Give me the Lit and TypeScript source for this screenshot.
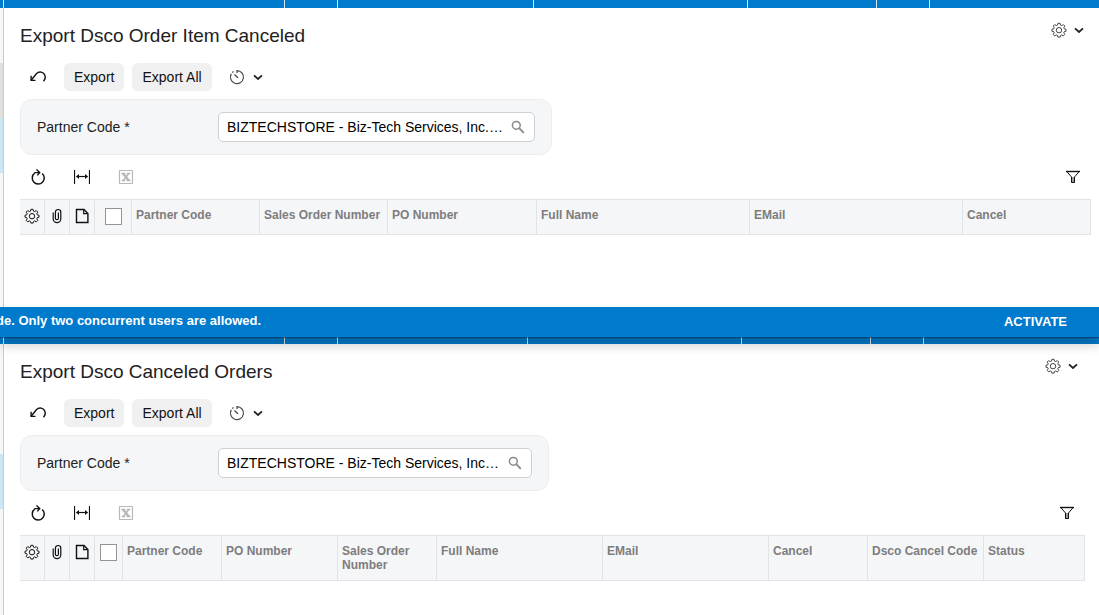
import { LitElement, html, css, svg } from "lit";
import { customElement, property } from "lit/decorators.js";

const gearPath =
  "M6.9 1.3h2.200l.4 1.800 1.200.5 1.600-1 1.500 1.500-1 1.600.5 1.200 1.700.3v2.100l-1.700.3-.5 1.200 1 1.600-1.500 1.500-1.600-1-1.200.5-.4 1.700H6.9l-.4-1.700-1.200-.5-1.600 1-1.500-1.500 1-1.600-.5-1.200L1 9.300V7.200l1.700-.3.5-1.200-1-1.600 1.500-1.500 1.600 1 1.200-.5z";

const shapes = {
  gear: svg`<path d=${gearPath} /><circle cx="8" cy="8.200" r="2.700" />`,
  chevron: svg`<path stroke-width="1.800" d="M4 6.300 8 10l4-3.700" />`,
  undo: svg`<path stroke-width="1.400" d="M1.200 11.200 6.300 4.700C9.300 1.900 13.300 2.900 14.700 5.900c.9 2.200.5 4.600-1.200 6.300" /><path stroke-width="1.400" d="M1.100 6.700v4.700h4.400" />`,
  clock: svg`<path stroke-width="1.200" d="M8 4V1.600a6.500 6.500 0 1 1-5.700 3.300M5.500 5.500 9 8.700M3.300 3.500l1.200-1" />`,
  refresh: svg`<path stroke-width="1.500" d="M4.700 4.200a6 6 0 1 0 7.500.3" /><path stroke-width="1.400" d="M4.400 3.600h5.200M6.500.6l3.200 3-2.400 2.800" />`,
  fit: svg`<path stroke-width="1.200" d="M.5 1v14M15.500 1v14" /><path stroke-width="1.200" d="M2.500 7.500h11" /><path fill="currentColor" stroke="none" d="M2 7.500 5 5v5zM14 7.500 11 5v5z" />`,
  excel: svg`<rect x="1.500" y="1.500" width="13" height="13" rx=".5" stroke-width="1.200" /><path stroke-width="2.800" d="m5.200 4.500 5.400 7" /><path stroke-width="1.400" d="m10.800 4.500-5.600 7M3.400 4.500h4M9 4.500h3.400M3.600 11.500H7M8.800 11.500h3.800" />`,
  filter: svg`<path fill="#999" stroke="none" d="M6.200 8h3.600v5.500H6.200z" /><path d="M14.200 2.500 9.500 8v5.500h-3V8L1.800 2.500" /><path stroke-width="1.400" d="M1 2.500h14" />`,
  clip: svg`<path stroke-width="1.200" d="M4.200 4.500v6.300a3.800 3.800 0 0 0 7.600 0V4.200a2.700 2.700 0 0 0-5.400 0v6a1.500 1.500 0 0 0 3 0V4.500" />`,
  page: svg`<path stroke-width="1.400" d="M2.500 1.500h7.500l3.900 4v9H2.500z" /><path stroke-width="1.200" d="M9.700 1.700v4h4" />`,
  search: svg`<circle cx="6.300" cy="6.300" r="3.900" stroke-width="1.500" /><path stroke-width="1.800" d="m9.200 9.200 4.600 4.600" />`,
};

const icon = (name: keyof typeof shapes) =>
  html`<svg class="icon ${name}" viewBox="0 0 16 16" aria-hidden="true">${shapes[name]}</svg>`;

interface Column {
  title: string;
  width: number;
}

@customElement("tab-strip")
class TabStrip extends LitElement {
  static styles = css`
    :host {
      display: flex;
      height: 8px;
      background: #007acc;
    }
    .segment {
      box-sizing: border-box;
      border-right: 1px solid #d5e6f3;
    }
    .edge { width: 4px; }
    .menu { width: 281px; }
    .narrow { width: 53px; }
    .search { flex: 1; }
    .company { width: 214px; }
    .date { width: 129px; }
    .tail { width: calc(161px + var(--gutter)); }
  `;

  render() {
    return html`
      ${["edge", "menu", "narrow", "search", "company", "date", "narrow"].map(
        (kind) => html`<span class="segment ${kind}"></span>`
      )}<span class="tail"></span>`;
  }
}

@customElement("export-screen")
class ExportScreen extends LitElement {
  @property() heading = "";
  @property() partner = "";
  @property({ type: Number }) checkWidth = 37;
  @property({ attribute: false }) columns: Column[] = [];

  static styles = css`
    :host {
      display: grid;
      grid-template-columns: 3px minmax(0, 1fr);
    }
    .rail {
      padding-top: var(--rail-top);
      background: #f5f6f8;
    }
    .hovered {
      height: var(--rail-hovered);
      background: #e1e0df;
    }
    .current {
      height: 55px;
      background: #cde6f5;
    }
    .panel {
      display: flex;
      flex-direction: column;
      gap: 8px;
      padding: 12px var(--gutter) var(--space-below) 16px;
      border-left: 1px solid #c9cbce;
      background: #fff;
    }
    .head {
      display: flex;
      justify-content: space-between;
      align-items: flex-start;
      padding-bottom: 3px;
    }
    h1 {
      margin: 0;
      font-size: 19px;
      font-weight: 400;
      line-height: 32px;
      color: #212121;
    }
    button {
      display: inline-flex;
      align-items: center;
      justify-content: center;
      height: 28px;
      padding: 0;
      border: 0;
      border-radius: 6px;
      background: none;
      color: #111;
      font: inherit;
      font-size: 14px;
      cursor: pointer;
    }
    .text {
      padding: 0 10px;
      background: #f0f0f0;
    }
    .tool { width: 36px; }
    .split {
      gap: 5px;
      padding: 0 9px;
      color: #444;
    }
    .settings {
      height: 20px;
      gap: 4px;
      padding: 0 4px;
      color: #444;
    }
    .bar {
      display: flex;
      gap: 8px;
    }
    .push { margin-left: auto; }
    .icon {
      display: block;
      width: 16px;
      height: 16px;
      flex: none;
      fill: none;
      stroke: currentColor;
    }
    .chevron { color: #222; }
    button:disabled { color: #b8b8b8; }
    .form {
      display: grid;
      grid-template-columns: 1fr 1fr;
      column-gap: 8px;
    }
    .card {
      display: flex;
      align-items: center;
      padding: 12px 16px;
      border: 1px solid #ebedef;
      border-radius: 12px;
      background: #f5f6f8;
      font-size: 14px;
    }
    .label {
      width: 181px;
      flex: none;
      color: #212121;
    }
    .lookup {
      display: flex;
      align-items: center;
      flex: 1;
      min-width: 0;
      height: 28px;
      padding: 0 8px;
      border: 1px solid #ced0d3;
      border-radius: 5px;
      background: #fff;
    }
    .value {
      flex: 1;
      min-width: 0;
      padding: 0;
      border: 0;
      outline: 0;
      background: none;
      color: #000;
      font: inherit;
      text-overflow: ellipsis;
    }
    .find {
      height: 16px;
      color: #888;
    }
    table {
      width: 100%;
      table-layout: fixed;
      border-collapse: separate;
      border-spacing: 0;
      background: #f5f6f8;
    }
    th {
      box-sizing: border-box;
      height: 36px;
      padding: 8px 4px;
      border: solid #e1e3e6;
      border-width: 1px 1px 1px 0;
      vertical-align: top;
      text-align: left;
      font-size: 12px;
      font-weight: 700;
      line-height: 14px;
      color: #7d7d7d;
    }
    .mark {
      color: #111;
    }
    .mark .icon { margin: 0 auto; }
    .tick {
      padding: 8px 0;
      text-align: center;
    }
    .all {
      appearance: none;
      display: block;
      box-sizing: border-box;
      width: 17px;
      height: 17px;
      margin: 0 auto;
      border: 1px solid #949494;
      background: #fff;
    }
  `;

  render() {
    return html`
      <div class="rail">
        <div class="hovered"></div>
        <div class="current"></div>
      </div>
      <main class="panel">
        <header class="head">
          <h1>${this.heading}</h1>
          <button class="settings" aria-label="Settings">${icon("gear")}${icon("chevron")}</button>
        </header>
        <div class="bar">
          <button class="tool" aria-label="Undo">${icon("undo")}</button>
          <button class="text">Export</button>
          <button class="text">Export All</button>
          <button class="split" aria-label="Schedule">${icon("clock")}${icon("chevron")}</button>
        </div>
        <div class="form">
          <div class="card">
            <label class="label" for="partner">Partner Code *</label>
            <div class="lookup">
              <input class="value" id="partner" .value=${this.partner} />
              <button class="find" aria-label="Search">${icon("search")}</button>
            </div>
          </div>
        </div>
        <div class="bar">
          <button class="tool" aria-label="Refresh">${icon("refresh")}</button>
          <button class="tool" aria-label="Fit to screen">${icon("fit")}</button>
          <button class="tool" aria-label="Export to Excel" disabled>${icon("excel")}</button>
          <button class="tool push" aria-label="Filter">${icon("filter")}</button>
        </div>
        <table>
          <colgroup>
            ${[25, 25, 25, this.checkWidth, ...this.columns.map((c) => c.width)].map(
              (width) => html`<col style="width:${width}px" />`
            )}
          </colgroup>
          <thead>
            <tr>
              <th class="mark" aria-label="Settings">${icon("gear")}</th>
              <th class="mark" aria-label="Files">${icon("clip")}</th>
              <th class="mark" aria-label="Notes">${icon("page")}</th>
              <th class="tick"><input class="all" type="checkbox" aria-label="Select all" /></th>
              ${this.columns.map((c) => html`<th scope="col">${c.title}</th>`)}
            </tr>
          </thead>
        </table>
      </main>
    `;
  }
}

@customElement("app-root")
class AppRoot extends LitElement {
  static styles = css`
    :host {
      display: flex;
      flex-direction: column;
      min-height: 100vh;
      background: #fff;
      font-family: "Liberation Sans", Arial, sans-serif;
    }
    .items {
      --gutter: 8px;
      --rail-top: 55px;
      --rail-hovered: 55px;
      --space-below: 72px;
    }
    .orders {
      --gutter: 14px;
      --rail-top: 110px;
      --rail-hovered: 0px;
      --space-below: 24px;
    }
    .grow { flex: 1; }
    .under { height: 7px; }
    .banner {
      position: relative;
      z-index: 1;
      box-sizing: border-box;
      display: flex;
      align-items: center;
      justify-content: space-between;
      height: 30px;
      padding-right: 32px;
      background: #007acc;
      color: #fff;
      font-size: 13px;
      font-weight: 700;
      line-height: 28px;
      box-shadow: 0 1px 1px rgba(0, 0, 0, 0.3), 0 8px 12px rgba(0, 0, 0, 0.2);
    }
    .message {
      margin: 0 0 0 -4px;
      padding-bottom: 2px;
      white-space: nowrap;
    }
    .activate {
      padding: 0;
      border: 0;
      background: none;
      color: inherit;
      font: inherit;
      cursor: pointer;
    }
  `;

  private itemColumns: Column[] = [
    { title: "Partner Code", width: 128 },
    { title: "Sales Order Number", width: 128 },
    { title: "PO Number", width: 149 },
    { title: "Full Name", width: 213 },
    { title: "EMail", width: 213 },
    { title: "Cancel", width: 128 },
  ];

  private orderColumns: Column[] = [
    { title: "Partner Code", width: 99 },
    { title: "PO Number", width: 116 },
    { title: "Sales Order Number", width: 99 },
    { title: "Full Name", width: 166 },
    { title: "EMail", width: 166 },
    { title: "Cancel", width: 99 },
    { title: "Dsco Cancel Code", width: 116 },
    { title: "Status", width: 101 },
  ];

  render() {
    return html`
      <tab-strip class="items"></tab-strip>
      <export-screen
        class="items"
        heading="Export Dsco Order Item Canceled"
        partner="BIZTECHSTORE - Biz-Tech Services, Inc.…"
        .checkWidth=${37}
        .columns=${this.itemColumns}
      ></export-screen>
      <div class="banner" role="status">
        <p class="message">de. Only two concurrent users are allowed.</p>
        <button class="activate">ACTIVATE</button>
      </div>
      <tab-strip class="orders under"></tab-strip>
      <export-screen
        class="orders grow"
        heading="Export Dsco Canceled Orders"
        partner="BIZTECHSTORE - Biz-Tech Services, Inc…"
        .checkWidth=${28}
        .columns=${this.orderColumns}
      ></export-screen>
    `;
  }
}
